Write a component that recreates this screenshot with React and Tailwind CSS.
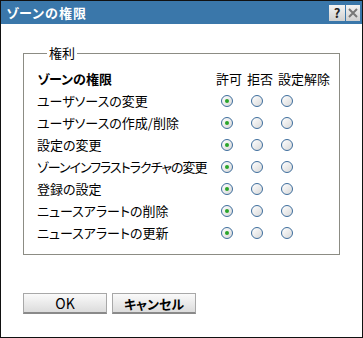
import React from 'react';

const rows = [
    { label: 'ユーザソースの変更' },
    { label: 'ユーザソースの作成/削除' },
    { label: '設定の変更' },
    { label: 'ゾーンインフラストラクチャの変更', tight: true },
    { label: '登録の設定' },
    { label: 'ニュースアラートの削除' },
    { label: 'ニュースアラートの更新' },
];

function Radio({ checked }) {
    return (
        <span className="w-[12px] h-[12px] rounded-full border border-[#3d6d9c] bg-gradient-to-br from-white to-[#d8d8d8] flex items-center justify-center">
            {checked && <span className="w-[4px] h-[4px] rounded-full bg-[#2aa52a]" />}
        </span>
    );
}

export default function App() {
    return (
        <div
            className="w-[363px] h-[338px] border border-[#111] bg-white flex flex-col text-[13px] text-black [font-feature-settings:'palt']"
            style={{ fontFamily: '"Noto Sans CJK JP", "Liberation Sans", sans-serif' }}
        >
            {/* title bar */}
            <div className="h-[23px] bg-[#3a77aa] flex items-center justify-between pl-[5px] pr-[2px]">
                <span className="text-white font-bold text-[13px] leading-none tracking-[1px]">ゾーンの権限</span>
                <div className="flex gap-[1px]">
                    <span className="w-[16px] h-[16px] bg-gradient-to-b from-[#f4f4f4] to-[#cfcfcf] flex items-center justify-center font-bold text-[13px] leading-none text-[#222]">?</span>
                    <span className="w-[14px] h-[16px] bg-gradient-to-b from-[#f4f4f4] to-[#cfcfcf] flex items-center justify-center">
                        <svg width="10" height="10" viewBox="0 0 10 10">
                            <path d="M1 1 L9 9 M9 1 L1 9" stroke="#777" strokeWidth="2" />
                        </svg>
                    </span>
                </div>
            </div>

            <div className="px-[22px] pt-[21px]">
                <fieldset className="border border-[#8c8c84] pl-[13px] pt-[6px] pb-[10px] w-[317px]">
                    <legend className="ml-[10px] px-[2px] leading-[16px]">権利</legend>
                    <div className="flex items-center h-[23px]">
                        <span className="w-[179px] font-bold">ゾーンの権限</span>
                        <span className="flex gap-[5px]">
                            <span>許可</span>
                            <span>拒否</span>
                            <span>設定解除</span>
                        </span>
                    </div>
                    {rows.map((row) => (
                        <div key={row.label} className="flex items-center h-[22px]">
                            <span className={row.tight ? 'w-[184px] whitespace-nowrap tracking-[-1px]' : 'w-[184px] whitespace-nowrap'}>
                                {row.label}
                            </span>
                            <div className="flex gap-[18px]">
                                <Radio checked />
                                <Radio />
                                <Radio />
                            </div>
                        </div>
                    ))}
                </fieldset>

                <div className="flex gap-[5px] mt-[38px]">
                    <button className="w-[84px] h-[21px] border border-[#a8a8a8] border-b-2 border-b-[#8a8a8a] bg-gradient-to-b from-[#fafafa] to-[#dcdcdc] text-[14px] leading-none">OK</button>
                    <button className="w-[84px] h-[21px] border border-[#a8a8a8] border-b-2 border-b-[#8a8a8a] bg-gradient-to-b from-[#fafafa] to-[#dcdcdc] text-[13px] font-bold leading-none">キャンセル</button>
                </div>
            </div>
        </div>
    );
}
